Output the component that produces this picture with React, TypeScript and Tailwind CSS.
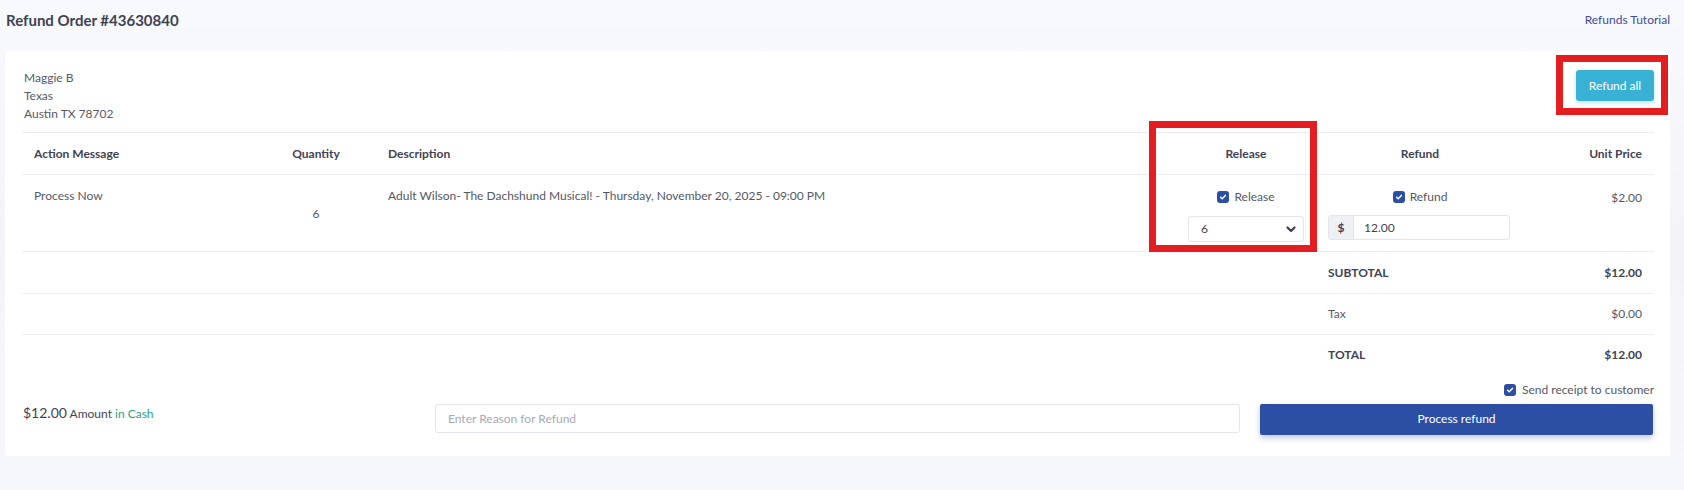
import React from 'react';

function Check({ className = '' }: { className?: string }) {
  return (
    <span className={`inline-flex items-center justify-center w-[12px] h-[12px] rounded-[3px] bg-[#2c4fa3] ${className}`}>
      <svg width="8" height="8" viewBox="0 0 8 8" fill="none">
        <path d="M1.6 4.2 L3.2 5.7 L6.4 2.4" stroke="white" strokeWidth="1.5" strokeLinecap="round" strokeLinejoin="round" />
      </svg>
    </span>
  );
}

function ChevronDown() {
  return (
    <svg width="10" height="7" viewBox="0 0 10 7" fill="none">
      <path d="M1.5 1.5 L5 5 L8.5 1.5" stroke="#3f4254" strokeWidth="2.2" strokeLinecap="round" strokeLinejoin="round" />
    </svg>
  );
}

const cell = 'px-[12px] border-t border-[#ebedf3]';

export default function App() {
  return (
    <div className="relative w-full h-[490px] bg-gradient-to-b from-[#f8f9fc] via-[#f3f4f8] to-[#f6f7fb] font-['Lato','Liberation_Sans',sans-serif] text-[12px] text-[#545867] overflow-hidden">
      {/* header */}
      <div className="h-[40px] flex items-center justify-between pl-[6px] pr-[14px]">
        <h1 className="text-[15px] font-bold text-[#3f4254]">Refund Order #43630840</h1>
        <a className="text-[12px] text-[#3d4b9c]">Refunds Tutorial</a>
      </div>

      {/* panel */}
      <div className="mt-[11px] ml-[5px] mr-[14px] bg-white rounded-[2px] pl-[17px] pr-[16px] pt-[18px] pb-[21px]">
        <div className="flex justify-between items-start">
          <div className="pl-[2px] leading-[18px] text-[12px] text-[#545867]">
            <div>Maggie B</div>
            <div>Texas</div>
            <div>Austin TX 78702</div>
          </div>
          <button className="mt-[1px] w-[78px] h-[31px] rounded-[3px] bg-[#39b1d5] text-white text-[12px] shadow-[0_2px_4px_rgba(57,177,213,0.35)]">
            Refund all
          </button>
        </div>

        <table className="mt-[9px] w-[1632px] table-fixed border-collapse">
          <thead>
            <tr className="h-[42px] text-[#3f4254] font-bold">
              <th className={`${cell} w-[234px] text-left`}>Action Message</th>
              <th className={`${cell} w-[120px] text-center`}>Quantity</th>
              <th className={`${cell} w-[800px] text-left`}>Description</th>
              <th className={`${cell} w-[140px] text-center`}>Release</th>
              <th className={`${cell} w-[208px] text-center`}>Refund</th>
              <th className={`${cell} w-[130px] text-right`}>Unit Price</th>
            </tr>
          </thead>
          <tbody>
            <tr className="h-[77px]">
              <td className={`${cell} align-top pt-[12px]`}>Process Now</td>
              <td className={`${cell} text-center align-middle pt-[1px]`}>6</td>
              <td className={`${cell} align-top pt-[12px]`}>
                Adult Wilson- The Dachshund Musical! - Thursday, November 20, 2025 - 09:00 PM
              </td>
              <td className={`${cell} align-top pt-[13px]`}>
                <div className="flex items-center justify-center gap-[5px] leading-[18px]">
                  <Check />
                  <span>Release</span>
                </div>
                <div className="mt-[10px] h-[26px] w-full border border-[#e2e5ec] rounded-[3px] flex items-center justify-between pl-[12px] pr-[7px] text-[#3f4254]">
                  <span>6</span>
                  <ChevronDown />
                </div>
              </td>
              <td className={`${cell} align-top pt-[13px]`}>
                <div className="flex items-center justify-center gap-[5px] leading-[18px]">
                  <Check />
                  <span>Refund</span>
                </div>
                <div className="mt-[9px] h-[25px] w-[182px] border border-[#e2e5ec] rounded-[3px] flex items-stretch overflow-hidden">
                  <span className="w-[25px] bg-[#eef0f4] border-r border-[#e2e5ec] flex items-center justify-center font-bold text-[#3f4254]">$</span>
                  <span className="flex items-center pl-[10px] text-[#3f4254]">12.00</span>
                </div>
              </td>
              <td className={`${cell} align-top pt-[14px] text-right`}>$2.00</td>
            </tr>
            <tr className="h-[42px]">
              <td colSpan={4} className={cell}></td>
              <td className={`${cell} font-bold text-[#3f4254]`}>SUBTOTAL</td>
              <td className={`${cell} text-right font-bold text-[#3f4254]`}>$12.00</td>
            </tr>
            <tr className="h-[41px]">
              <td colSpan={4} className={cell}></td>
              <td className={cell}>Tax</td>
              <td className={`${cell} text-right`}>$0.00</td>
            </tr>
            <tr className="h-[41px]">
              <td colSpan={4} className={cell}></td>
              <td className={`${cell} font-bold text-[#3f4254]`}>TOTAL</td>
              <td className={`${cell} text-right font-bold text-[#3f4254]`}>$12.00</td>
            </tr>
          </tbody>
        </table>

        <div className="mt-[5px] flex justify-end items-center gap-[6px] leading-[18px]">
          <Check />
          <span>Send receipt to customer</span>
        </div>
        <div className="mt-[5px] flex items-start">
          <div className="w-[413px] pl-[1px] pt-[1px] leading-[16px]">
            <span className="text-[14px] text-[#3f4254]">$12.00</span>{' '}
            <span className="text-[12px] text-[#3f4254]">Amount</span>{' '}
            <span className="text-[12px] text-[#1fa285]">in Cash</span>
          </div>
          <input
            className="w-[805px] h-[29px] border border-[#e2e5ec] rounded-[3px] px-[12px] text-[12px] placeholder:text-[#a6a9b7] outline-none"
            placeholder="Enter Reason for Refund"
          />
          <button className="ml-[20px] w-[393px] h-[31px] rounded-[2px] bg-[#2c4fa3] text-white text-[12px] shadow-[0_3px_6px_rgba(44,79,163,0.3)]">
            Process refund
          </button>
        </div>
      </div>

      {/* annotation boxes */}
      <div className="absolute left-[1556px] top-[55px] w-[112px] h-[60px] border-[7px] border-[#e41d20]" />
      <div className="absolute left-[1149px] top-[121px] w-[168px] h-[131px] border-[7px] border-[#e41d20]" />
    </div>
  );
}
